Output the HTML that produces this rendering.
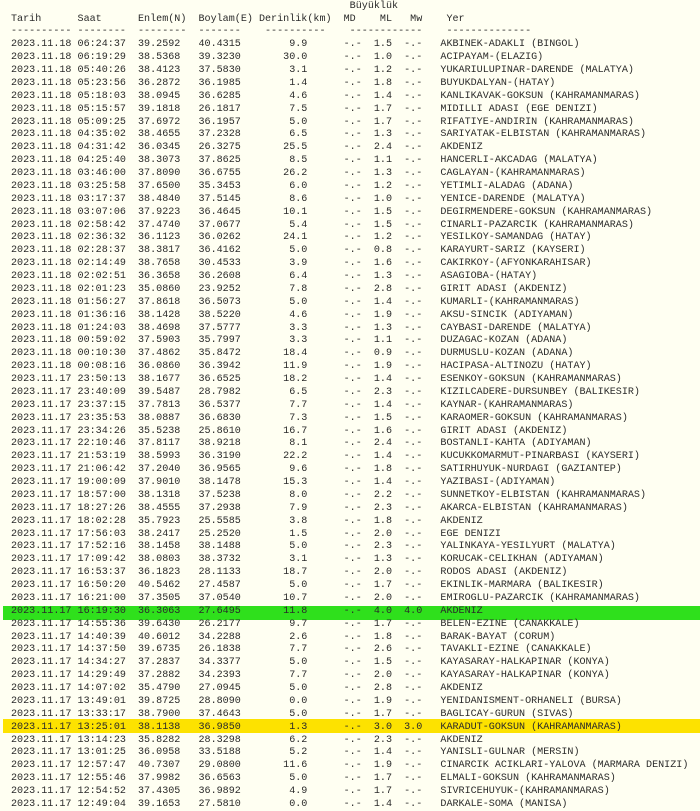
<!DOCTYPE html>
<html><head><meta charset="utf-8"><style>
html,body{margin:0;padding:0;background:#fffff2;width:700px;height:811px;overflow:hidden}
pre{position:relative;z-index:1;margin:0;padding:0.7px 0 0 11px;font-family:"Liberation Mono",monospace;font-size:10.08px;line-height:12.87px;color:#2a2a2a;white-space:pre}
.b{position:absolute;left:3px;width:697px;height:14px;z-index:0}
</style></head><body>
<div class="b" style="top:606px;background:#2fe01c"></div>
<div class="b" style="top:719px;background:#fde200"></div>
<pre>                                                        Büyüklük
Tarih      Saat      Enlem(N)  Boylam(E) Derinlik(km)  MD    ML   Mw    Yer
---------- --------  --------  -------    ----------    ------------    --------------
2023.11.18 06:24:37  39.2592   40.4315        9.9      -.-  1.5  -.-   AKBINEK-ADAKLI (BINGOL)
2023.11.18 06:19:29  38.5368   39.3230       30.0      -.-  1.0  -.-   ACIPAYAM-(ELAZIG)
2023.11.18 05:40:26  38.4123   37.5830        3.1      -.-  1.2  -.-   YUKARIULUPINAR-DARENDE (MALATYA)
2023.11.18 05:23:56  36.2872   36.1985        1.4      -.-  1.8  -.-   BUYUKDALYAN-(HATAY)
2023.11.18 05:18:03  38.0945   36.6285        4.6      -.-  1.4  -.-   KANLIKAVAK-GOKSUN (KAHRAMANMARAS)
2023.11.18 05:15:57  39.1818   26.1817        7.5      -.-  1.7  -.-   MIDILLI ADASI (EGE DENIZI)
2023.11.18 05:09:25  37.6972   36.1957        5.0      -.-  1.7  -.-   RIFATIYE-ANDIRIN (KAHRAMANMARAS)
2023.11.18 04:35:02  38.4655   37.2328        6.5      -.-  1.3  -.-   SARIYATAK-ELBISTAN (KAHRAMANMARAS)
2023.11.18 04:31:42  36.0345   26.3275       25.5      -.-  2.4  -.-   AKDENIZ
2023.11.18 04:25:40  38.3073   37.8625        8.5      -.-  1.1  -.-   HANCERLI-AKCADAG (MALATYA)
2023.11.18 03:46:00  37.8090   36.6755       26.2      -.-  1.3  -.-   CAGLAYAN-(KAHRAMANMARAS)
2023.11.18 03:25:58  37.6500   35.3453        6.0      -.-  1.2  -.-   YETIMLI-ALADAG (ADANA)
2023.11.18 03:17:37  38.4840   37.5145        8.6      -.-  1.0  -.-   YENICE-DARENDE (MALATYA)
2023.11.18 03:07:06  37.9223   36.4645       10.1      -.-  1.5  -.-   DEGIRMENDERE-GOKSUN (KAHRAMANMARAS)
2023.11.18 02:58:42  37.4740   37.0677        5.4      -.-  1.5  -.-   CINARLI-PAZARCIK (KAHRAMANMARAS)
2023.11.18 02:36:32  36.1123   36.0262       24.1      -.-  1.2  -.-   YESILKOY-SAMANDAG (HATAY)
2023.11.18 02:28:37  38.3817   36.4162        5.0      -.-  0.8  -.-   KARAYURT-SARIZ (KAYSERI)
2023.11.18 02:14:49  38.7658   30.4533        3.9      -.-  1.6  -.-   CAKIRKOY-(AFYONKARAHISAR)
2023.11.18 02:02:51  36.3658   36.2608        6.4      -.-  1.3  -.-   ASAGIOBA-(HATAY)
2023.11.18 02:01:23  35.0860   23.9252        7.8      -.-  2.8  -.-   GIRIT ADASI (AKDENIZ)
2023.11.18 01:56:27  37.8618   36.5073        5.0      -.-  1.4  -.-   KUMARLI-(KAHRAMANMARAS)
2023.11.18 01:36:16  38.1428   38.5220        4.6      -.-  1.9  -.-   AKSU-SINCIK (ADIYAMAN)
2023.11.18 01:24:03  38.4698   37.5777        3.3      -.-  1.3  -.-   CAYBASI-DARENDE (MALATYA)
2023.11.18 00:59:02  37.5903   35.7997        3.3      -.-  1.1  -.-   DUZAGAC-KOZAN (ADANA)
2023.11.18 00:10:30  37.4862   35.8472       18.4      -.-  0.9  -.-   DURMUSLU-KOZAN (ADANA)
2023.11.18 00:08:16  36.0860   36.3942       11.9      -.-  1.9  -.-   HACIPASA-ALTINOZU (HATAY)
2023.11.17 23:50:13  38.1677   36.6525       18.2      -.-  1.4  -.-   ESENKOY-GOKSUN (KAHRAMANMARAS)
2023.11.17 23:40:09  39.5487   28.7982        6.5      -.-  2.3  -.-   KIZILCADERE-DURSUNBEY (BALIKESIR)
2023.11.17 23:37:15  37.7813   36.5377        7.7      -.-  1.4  -.-   KAYNAR-(KAHRAMANMARAS)
2023.11.17 23:35:53  38.0887   36.6830        7.3      -.-  1.5  -.-   KARAOMER-GOKSUN (KAHRAMANMARAS)
2023.11.17 23:34:26  35.5238   25.8610       16.7      -.-  1.6  -.-   GIRIT ADASI (AKDENIZ)
2023.11.17 22:10:46  37.8117   38.9218        8.1      -.-  2.4  -.-   BOSTANLI-KAHTA (ADIYAMAN)
2023.11.17 21:53:19  38.5993   36.3190       22.2      -.-  1.4  -.-   KUCUKKOMARMUT-PINARBASI (KAYSERI)
2023.11.17 21:06:42  37.2040   36.9565        9.6      -.-  1.8  -.-   SATIRHUYUK-NURDAGI (GAZIANTEP)
2023.11.17 19:00:09  37.9010   38.1478       15.3      -.-  1.4  -.-   YAZIBASI-(ADIYAMAN)
2023.11.17 18:57:00  38.1318   37.5238        8.0      -.-  2.2  -.-   SUNNETKOY-ELBISTAN (KAHRAMANMARAS)
2023.11.17 18:27:26  38.4555   37.2938        7.9      -.-  2.3  -.-   AKARCA-ELBISTAN (KAHRAMANMARAS)
2023.11.17 18:02:28  35.7923   25.5585        3.8      -.-  1.8  -.-   AKDENIZ
2023.11.17 17:56:03  38.2417   25.2520        1.5      -.-  2.0  -.-   EGE DENIZI
2023.11.17 17:52:16  38.1458   38.1488        5.0      -.-  2.3  -.-   YALINKAYA-YESILYURT (MALATYA)
2023.11.17 17:09:42  38.0803   38.3732        3.1      -.-  1.3  -.-   KORUCAK-CELIKHAN (ADIYAMAN)
2023.11.17 16:53:37  36.1823   28.1133       18.7      -.-  2.0  -.-   RODOS ADASI (AKDENIZ)
2023.11.17 16:50:20  40.5462   27.4587        5.0      -.-  1.7  -.-   EKINLIK-MARMARA (BALIKESIR)
2023.11.17 16:21:00  37.3505   37.0540       10.7      -.-  2.0  -.-   EMIROGLU-PAZARCIK (KAHRAMANMARAS)
2023.11.17 16:19:30  36.3063   27.6495       11.8      -.-  4.0  4.0   AKDENIZ
2023.11.17 14:55:36  39.6430   26.2177        9.7      -.-  1.7  -.-   BELEN-EZINE (CANAKKALE)
2023.11.17 14:40:39  40.6012   34.2288        2.6      -.-  1.8  -.-   BARAK-BAYAT (CORUM)
2023.11.17 14:37:50  39.6735   26.1838        7.7      -.-  2.6  -.-   TAVAKLI-EZINE (CANAKKALE)
2023.11.17 14:34:27  37.2837   34.3377        5.0      -.-  1.5  -.-   KAYASARAY-HALKAPINAR (KONYA)
2023.11.17 14:29:49  37.2882   34.2393        7.7      -.-  2.0  -.-   KAYASARAY-HALKAPINAR (KONYA)
2023.11.17 14:07:02  35.4790   27.0945        5.0      -.-  2.8  -.-   AKDENIZ
2023.11.17 13:49:01  39.8725   28.8090        0.0      -.-  1.9  -.-   YENIDANISMENT-ORHANELI (BURSA)
2023.11.17 13:33:17  38.7900   37.4643        5.0      -.-  1.7  -.-   BAGLICAY-GURUN (SIVAS)
2023.11.17 13:25:01  38.1138   36.9850        1.3      -.-  3.0  3.0   KARADUT-GOKSUN (KAHRAMANMARAS)
2023.11.17 13:14:23  35.8282   28.3298        6.2      -.-  2.3  -.-   AKDENIZ
2023.11.17 13:01:25  36.0958   33.5188        5.2      -.-  1.4  -.-   YANISLI-GULNAR (MERSIN)
2023.11.17 12:57:47  40.7307   29.0800       11.6      -.-  1.9  -.-   CINARCIK ACIKLARI-YALOVA (MARMARA DENIZI)
2023.11.17 12:55:46  37.9982   36.6563        5.0      -.-  1.7  -.-   ELMALI-GOKSUN (KAHRAMANMARAS)
2023.11.17 12:54:52  37.4305   36.9892        4.9      -.-  1.7  -.-   SIVRICEHUYUK-(KAHRAMANMARAS)
2023.11.17 12:49:04  39.1653   27.5810        0.0      -.-  1.4  -.-   DARKALE-SOMA (MANISA)</pre>
</body></html>
